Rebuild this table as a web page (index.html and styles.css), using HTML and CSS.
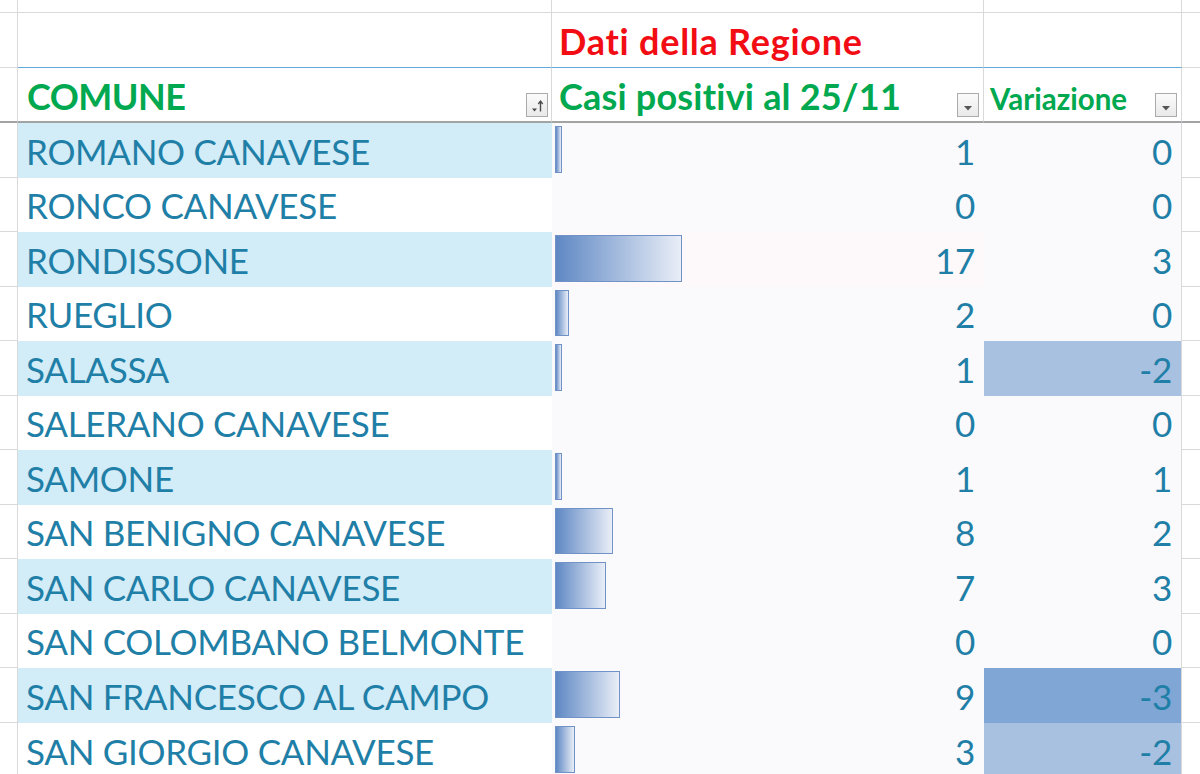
FILE: index.html
```html
<!DOCTYPE html>
<html lang="it">
<head>
<meta charset="utf-8">
<title>Comuni</title>
<link rel="stylesheet" href="styles.css">
</head>
<body>
<div class="sheet">
  <div class="row r-top">
    <div class="c stub"></div><div class="c c1"></div><div class="c c2"></div><div class="c c3"></div><div class="c end"></div>
  </div>
  <div class="row r-h1">
    <div class="c stub"></div>
    <div class="c c1"></div>
    <div class="c c2"><span class="title-red">Dati della Regione</span></div>
    <div class="c c3"></div>
    <div class="c end"></div>
  </div>
  <div class="row r-h2">
    <div class="c stub"></div>
    <div class="c c1"><span class="hdr h-comune">COMUNE</span>
      <span class="fbtn"><svg width="20" height="22" viewBox="0 0 20 22"><path d="M5 14.5h5l-2.5 3z" fill="#4a4a4a"/><path d="M13.5 17.5V7.5" stroke="#4a4a4a" stroke-width="1.4"/><path d="M11.3 10l2.2-3 2.2 3" fill="none" stroke="#4a4a4a" stroke-width="1.3"/></svg></span>
    </div>
    <div class="c c2"><span class="hdr h-casi">Casi positivi al 25/11</span>
      <span class="fbtn"><svg width="20" height="22" viewBox="0 0 20 22"><path d="M6 12h8l-4 4.5z" fill="#555"/></svg></span>
    </div>
    <div class="c c3"><span class="hdr small">Variazione</span>
      <span class="fbtn"><svg width="20" height="22" viewBox="0 0 20 22"><path d="M6 12h8l-4 4.5z" fill="#555"/></svg></span>
    </div>
    <div class="c end"></div>
  </div>

  <div class="row data alt">
    <div class="c stub"></div>
    <div class="c c1">ROMANO CANAVESE</div>
    <div class="c c2"><span class="bar" style="width:7px"></span><span class="num">1</span></div>
    <div class="c c3"><span class="num">0</span></div>
    <div class="c end"></div>
  </div>
  <div class="row data">
    <div class="c stub"></div>
    <div class="c c1">RONCO CANAVESE</div>
    <div class="c c2"><span class="num">0</span></div>
    <div class="c c3"><span class="num">0</span></div>
    <div class="c end"></div>
  </div>
  <div class="row data alt">
    <div class="c stub"></div>
    <div class="c c1">RONDISSONE</div>
    <div class="c c2 pink"><span class="bar" style="width:127px"></span><span class="num">17</span></div>
    <div class="c c3"><span class="num">3</span></div>
    <div class="c end"></div>
  </div>
  <div class="row data">
    <div class="c stub"></div>
    <div class="c c1">RUEGLIO</div>
    <div class="c c2"><span class="bar" style="width:14px"></span><span class="num">2</span></div>
    <div class="c c3"><span class="num">0</span></div>
    <div class="c end"></div>
  </div>
  <div class="row data alt">
    <div class="c stub"></div>
    <div class="c c1">SALASSA</div>
    <div class="c c2"><span class="bar" style="width:7px"></span><span class="num">1</span></div>
    <div class="c c3 neg2"><span class="num">-2</span></div>
    <div class="c end"></div>
  </div>
  <div class="row data">
    <div class="c stub"></div>
    <div class="c c1">SALERANO CANAVESE</div>
    <div class="c c2"><span class="num">0</span></div>
    <div class="c c3"><span class="num">0</span></div>
    <div class="c end"></div>
  </div>
  <div class="row data alt">
    <div class="c stub"></div>
    <div class="c c1">SAMONE</div>
    <div class="c c2"><span class="bar" style="width:7px"></span><span class="num">1</span></div>
    <div class="c c3"><span class="num">1</span></div>
    <div class="c end"></div>
  </div>
  <div class="row data">
    <div class="c stub"></div>
    <div class="c c1">SAN BENIGNO CANAVESE</div>
    <div class="c c2"><span class="bar" style="width:58px"></span><span class="num">8</span></div>
    <div class="c c3"><span class="num">2</span></div>
    <div class="c end"></div>
  </div>
  <div class="row data alt">
    <div class="c stub"></div>
    <div class="c c1">SAN CARLO CANAVESE</div>
    <div class="c c2"><span class="bar" style="width:51px"></span><span class="num">7</span></div>
    <div class="c c3"><span class="num">3</span></div>
    <div class="c end"></div>
  </div>
  <div class="row data">
    <div class="c stub"></div>
    <div class="c c1">SAN COLOMBANO BELMONTE</div>
    <div class="c c2"><span class="num">0</span></div>
    <div class="c c3"><span class="num">0</span></div>
    <div class="c end"></div>
  </div>
  <div class="row data alt">
    <div class="c stub"></div>
    <div class="c c1">SAN FRANCESCO AL CAMPO</div>
    <div class="c c2"><span class="bar" style="width:65px"></span><span class="num">9</span></div>
    <div class="c c3 neg3"><span class="num">-3</span></div>
    <div class="c end"></div>
  </div>
  <div class="row data">
    <div class="c stub"></div>
    <div class="c c1">SAN GIORGIO CANAVESE</div>
    <div class="c c2"><span class="bar" style="width:20px"></span><span class="num">3</span></div>
    <div class="c c3 neg2"><span class="num">-2</span></div>
    <div class="c end"></div>
  </div>
</div>
</body>
</html>
```

FILE: styles.css
```css
html, body {
  margin: 0;
  padding: 0;
  background: #ffffff;
}
body {
  width: 1200px;
  height: 774px;
  overflow: hidden;
  font-family: Lato, "Open Sans", sans-serif;
}
.sheet {
  display: flex;
  flex-direction: column;
}
.row {
  display: grid;
  grid-template-columns: 18px 534px 432px 198px 18px;
}
.c {
  box-sizing: border-box;
  border-right: 1px solid #d9d9d9;
  border-bottom: 1px solid #d9d9d9;
  display: flex;
  align-items: flex-end;
  min-width: 0;
}
.end {
  border-right: none;
}
.r-top { height: 13px; }
.r-h1 { height: 55px; }
.r-h2 { height: 55px; }

.r-h1 .c1, .r-h1 .c2, .r-h1 .c3 {
  border-bottom: 1px solid #62aadd;
}
.r-h1 .c2 {
  padding: 0 0 8px 7px;
}
.title-red {
  color: #f20d14;
  font-weight: 700;
  font-size: 36px;
  line-height: 36px;
  letter-spacing: 0.75px;
  white-space: nowrap;
}
.r-h2 .c {
  border-bottom: 2px solid #a3a3a3;
}
.r-h2 .c1 { padding: 0 3px 7px 9px; }
.r-h2 .c2 { padding: 0 4px 7px 7px; }
.r-h2 .c3 { padding: 0 4px 7px 6px; }
.hdr {
  color: #00a84f;
  font-weight: 700;
  font-size: 36px;
  line-height: 36px;
  white-space: nowrap;
}
.h-comune { letter-spacing: -0.5px; }
.h-casi { letter-spacing: 0.2px; }
.hdr.small {
  font-size: 29.5px;
  line-height: 29px;
  padding-bottom: 1px;
}
.fbtn {
  margin-left: auto;
  margin-bottom: -3px;
  box-sizing: border-box;
  width: 22px;
  height: 24px;
  border: 1px solid #ababab;
  background: linear-gradient(#fbfbfb, #e9e9e9);
  display: flex;
  align-items: center;
  justify-content: center;
}
.fbtn svg { display: block; }

.data { height: 54.55px; }
.data .c1, .data .c2, .data .c3 {
  border: none;
  color: #1f7fa7;
  font-size: 35px;
  line-height: 35px;
  letter-spacing: -0.3px;
  padding-bottom: 9px;
  white-space: nowrap;
}
.data .c1 {
  padding-left: 8px;
  background: #ffffff;
}
.data.alt .c1 {
  background: #d2ecf8;
}
.data .c2 {
  background: #fafafd;
  padding-left: 3px;
  padding-right: 9px;
  padding-top: 3px;
}
.data .c2.pink {
  background: #fdf8fa;
}
.data .c3 {
  background: #fafafd;
  padding-right: 10px;
}
.data .c3.neg2 { background: #a9c1e1; }
.data .c3.neg3 { background: #7fa6d4; }
.data .stub {
  border-right: 1px solid #d9d9d9;
}
.data .end {
  border-left: 1px solid #d9d9d9;
  margin-left: -1px;
}
.bar {
  align-self: stretch;
  margin-bottom: -4px;
  box-sizing: border-box;
  border: 1.5px solid #7192c6;
  background: linear-gradient(to right, #5f88c4, #e9eef7);
}
.num {
  margin-left: auto;
}
```
